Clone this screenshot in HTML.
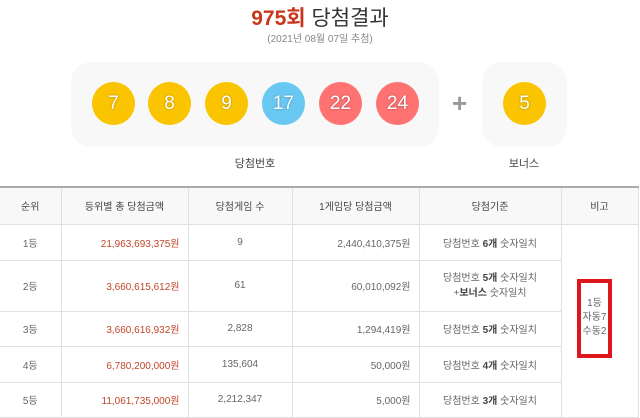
<!DOCTYPE html>
<html><head><meta charset="utf-8"><style>
*{margin:0;padding:0;box-sizing:border-box}
body{width:640px;height:418px;background:#fff;font-family:"Liberation Sans","Noto Sans CJK KR",sans-serif;position:relative;overflow:hidden;color:#666}
.abs{position:absolute}
.title{left:0;width:640px;top:2px;text-align:center;font-size:21px;color:#333}
.title b{color:#c8361b;font-weight:bold}
.sub{left:0;width:640px;top:30px;text-align:center;font-size:10px;color:#888}
.box{background:#f8f8f8;border-radius:20px}
.ball{width:43px;height:43px;border-radius:50%;color:#fff;font-size:19px;text-align:center;line-height:43px;text-shadow:0 0 2px rgba(0,0,0,.35)}
.y{background:#fbc400}.b{background:#69c8f2}.r{background:#ff7272}
.lbl{font-size:11px;color:#444;text-align:center}
table{position:absolute;left:0;top:186px;border-collapse:collapse;font-size:10px;color:#666}
td,th{border:1px solid #e0e0e0;text-align:center;font-weight:normal}
tr td:first-child,tr th:first-child{border-left:none}
th{background:#f8f8f8;color:#444;height:37px}
table{border-top:2px solid #aaa}
.m{color:#c0472a;text-align:right;padding-right:8px}
.rt{text-align:right;padding-right:8px}
td b{color:#444}
</style></head><body>
<div class="abs title"><b>975회</b> 당첨결과</div>
<div class="abs sub">(2021년 08월 07일 추첨)</div>
<div class="abs box" style="left:71px;top:62px;width:368px;height:85px"></div>
<div class="abs box" style="left:482px;top:62px;width:85px;height:85px"></div>
<div class="abs ball y" style="left:92px;top:82px">7</div>
<div class="abs ball y" style="left:148px;top:82px">8</div>
<div class="abs ball y" style="left:205px;top:82px">9</div>
<div class="abs ball b" style="left:262px;top:82px">17</div>
<div class="abs ball r" style="left:319px;top:82px">22</div>
<div class="abs ball r" style="left:376px;top:82px">24</div>
<div class="abs ball y" style="left:503px;top:82px">5</div>
<div class="abs" style="left:452px;top:88px;font-size:26px;color:#999;font-weight:bold;line-height:30px">+</div>
<div class="abs lbl" style="left:205px;top:155px;width:100px">당첨번호</div>
<div class="abs lbl" style="left:474px;top:155px;width:100px">보너스</div>
<table>
<tr><th style="width:61px">순위</th><th style="width:127px">등위별 총 당첨금액</th><th style="width:104px">당첨게임 수</th><th style="width:127px">1게임당 당첨금액</th><th style="width:142px">당첨기준</th><th style="width:77px">비고</th></tr>
<tr style="height:36px"><td>1등</td><td class="m">21,963,693,375원</td><td>9</td><td class="rt">2,440,410,375원</td><td>당첨번호 <b>6개</b> 숫자일치</td><td rowspan="5"></td></tr>
<tr style="height:51px"><td>2등</td><td class="m">3,660,615,612원</td><td>61</td><td class="rt">60,010,092원</td><td style="line-height:15px">당첨번호 <b>5개</b> 숫자일치<br>+<b>보너스</b> 숫자일치</td></tr>
<tr style="height:35px"><td>3등</td><td class="m">3,660,616,932원</td><td>2,828</td><td class="rt">1,294,419원</td><td>당첨번호 <b>5개</b> 숫자일치</td></tr>
<tr style="height:36px"><td>4등</td><td class="m">6,780,200,000원</td><td>135,604</td><td class="rt">50,000원</td><td>당첨번호 <b>4개</b> 숫자일치</td></tr>
<tr style="height:35px"><td>5등</td><td class="m">11,061,735,000원</td><td>2,212,347</td><td class="rt">5,000원</td><td>당첨번호 <b>3개</b> 숫자일치</td></tr>
</table>
<div class="abs" style="left:577px;top:279px;width:35px;height:79px;border:4px solid #e0161e;font-size:10px;color:#666;text-align:center;line-height:14px;padding-top:14px">1등<br>자동7<br>수동2</div>
</body></html>
